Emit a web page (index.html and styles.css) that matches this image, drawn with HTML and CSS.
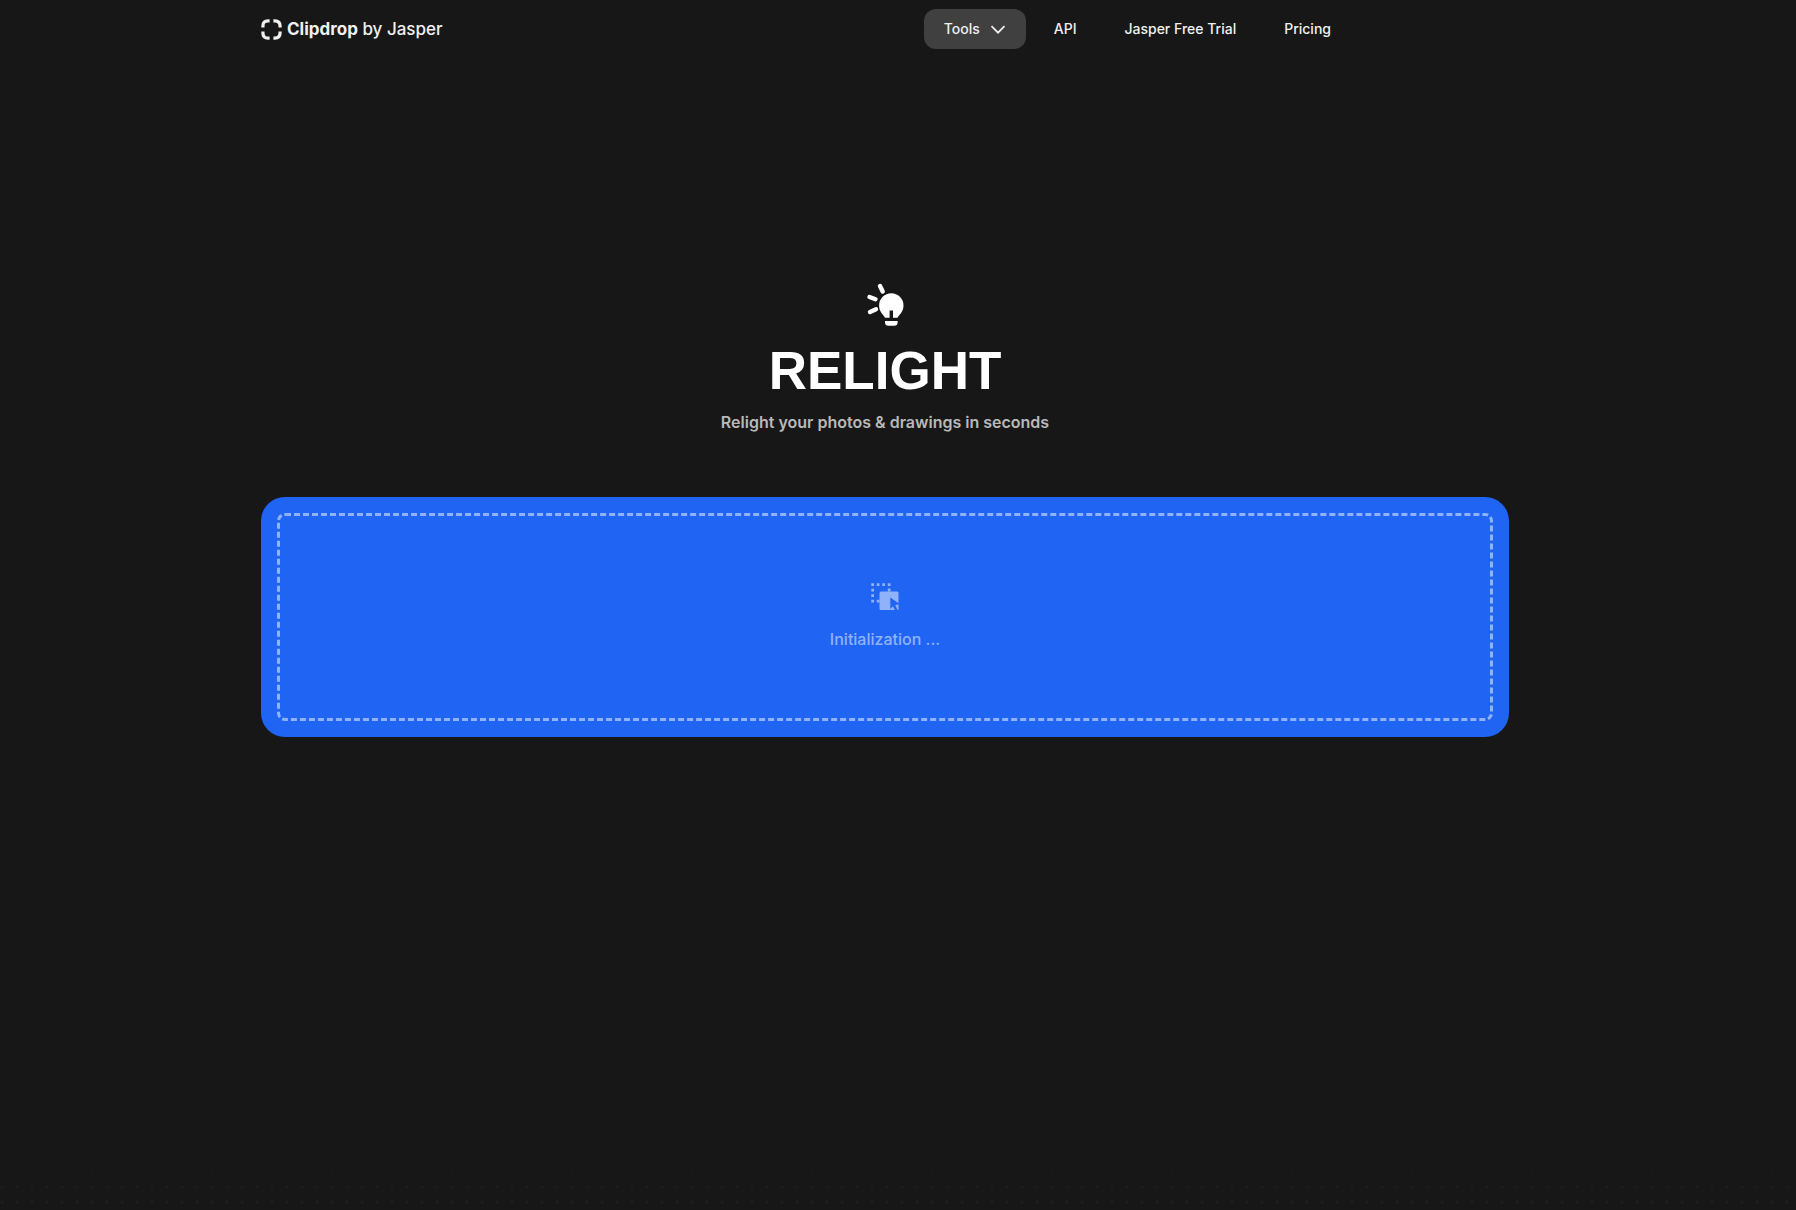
FILE: index.html
```html
<!DOCTYPE html>
<html lang="en">
<head>
<meta charset="utf-8">
<meta name="viewport" content="width=device-width, initial-scale=1">
<title>Relight – Clipdrop</title>
<link rel="stylesheet" href="styles.css">
</head>
<body>
<div class="page">
  <div class="content">
    <header class="header container">
      <a class="brand" href="#">
        <svg class="brand-icon" viewBox="0 0 22 22" fill="none" stroke="currentColor" stroke-width="3.4" aria-hidden="true">
          <path d="M2 9V7.500Q2 2 7.500 2H9M13 2h1.500Q20 2 20 7.500V9M20 13v1.500Q20 20 14.500 20H13M9 20H7.500Q2 20 2 14.500V13"/>
        </svg>
        <span><strong>Clipdrop</strong> by Jasper</span>
      </a>
      <nav class="nav">
        <button class="nav-item nav-tools" type="button">Tools
          <svg class="chevron" viewBox="0 0 16 16" fill="none" stroke="currentColor" stroke-width="1.7" aria-hidden="true"><path d="M1.500 5.200L8 11.700l6.500-6.500"/></svg>
        </button>
        <a class="nav-item" href="#">API</a>
        <a class="nav-item" href="#">Jasper Free Trial</a>
        <a class="nav-item" href="#">Pricing</a>
      </nav>
    </header>
    <main class="container">
      <section class="hero">
        <svg class="bulb" viewBox="0 0 48 48" fill="currentColor" aria-hidden="true">
          <path d="M19 6l2.700 5.500M8.500 17l6 2.300M9 32l6-2.800" fill="none" stroke="currentColor" stroke-width="4.400" stroke-linecap="round"/>
          <path d="M30.300 13.300a12.200 12.200 0 0 1 12.200 12.200c0 6.500-4 8.500-6 12.200h-4.500V30.500h-3.400v7.200H24.100c-2-3.700-6-5.700-6-12.200A12.200 12.200 0 0 1 30.300 13.300z"/>
          <path d="M24 41h12.600v1.200q0 3.500-3.500 3.500h-5.600q-3.500 0-3.500-3.500z"/>
        </svg>
        <h1>RELIGHT</h1>
        <p>Relight your photos &amp; drawings in seconds</p>
      </section>
      <section class="upload">
        <div class="dropzone">
          <svg class="drop-icon" viewBox="0 0 28 28" fill="currentColor" aria-hidden="true">
            <path d="M.300.300h2.700v2.700H.300zM5.800.300h2.700v2.700H5.800zM11.300.300h2.700v2.700h-2.700zM16.800.300h2.700v2.700h-2.700zM.300 5.800h2.700v2.700H.300zM.300 11.300h2.700v2.700H.300zM.300 16.800h2.700v2.700H.300zM5.800 16.800H8.500v2.700H5.800zM16.800 5.500h2.700v3h-2.700z"/>
            <path fill-rule="evenodd" d="M10 8.500h16q1.500 0 1.500 1.500v10.300L19.300 14.600V26l2.700-2.800 1.800 3.800H10q-1.500 0-1.500-1.500V10q0-1.500 1.500-1.500zM24.300 22l3.200-.600V27H26.500z"/>
          </svg>
          <p>Initialization ...</p>
        </div>
      </section>
    </main>
  </div>
  <div class="dots"></div>
</div>
</body>
</html>
```
FILE: styles.css
```css
* { box-sizing: border-box; }
body {
  margin: 0;
  background: #171717;
  color: #f0f0f0;
  font-family: Inter, sans-serif;
}
.page {
  min-height: 100vh;
  display: flex;
  flex-direction: column;
}
.content { padding-right: 26px; }
.container {
  max-width: 1280px;
  padding: 0 16px;
  margin: 0 auto;
}
.header {
  display: flex;
  align-items: center;
  justify-content: space-between;
  height: 58px;
}
.brand {
  display: flex;
  align-items: center;
  gap: 5px;
  color: inherit;
  text-decoration: none;
  font-size: 17px;
  line-height: 26px;
  font-weight: 500;
}
.brand strong { font-weight: 700; }
.brand-icon { width: 21px; height: 21px; }
.nav {
  display: flex;
  gap: 8px;
  margin-right: 158px;
}
.nav-item {
  display: flex;
  align-items: center;
  gap: 10px;
  height: 40px;
  padding: 0 20px;
  border: 0;
  border-radius: 12px;
  background: none;
  color: inherit;
  font: 500 14px/20px Inter, sans-serif;
  text-decoration: none;
  white-space: nowrap;
}
.nav-tools { background: #404040; }
.chevron { width: 16px; height: 16px; }
.hero {
  display: flex;
  flex-direction: column;
  align-items: center;
  padding-top: 222px;
  text-align: center;
}
.bulb { width: 48px; height: 48px; color: #fff; }
h1 {
  margin: 13px 0 9px;
  color: #fff;
  font-family: "Liberation Sans", sans-serif;
  font-size: 53px;
  line-height: 60px;
  font-weight: 700;
}
.hero p {
  margin: 0;
  color: #b9b9b9;
  font-size: 16px;
  line-height: 24px;
  font-weight: 600;
}
.upload {
  display: flex;
  min-height: 240px;
  margin-top: 63px;
  padding: 16px;
  border-radius: 24px;
  background: #2064f4;
}
.dropzone {
  flex: 1;
  display: flex;
  flex-direction: column;
  align-items: center;
  justify-content: center;
  gap: 16px;
  border: 3px dashed #90b2fa;
  border-radius: 8px;
  color: #90b2fa;
}
.drop-icon { width: 28px; height: 28px; }
.dropzone p {
  margin: 0;
  font-size: 16px;
  line-height: 24px;
  font-weight: 500;
}
.dots {
  height: 60px;
  margin-top: auto;
  background: radial-gradient(circle at 2px 7px, #202020 1px, transparent 2px) 0 0 / 15px 15px;
  mask-image: linear-gradient(transparent, #000);
}
```
